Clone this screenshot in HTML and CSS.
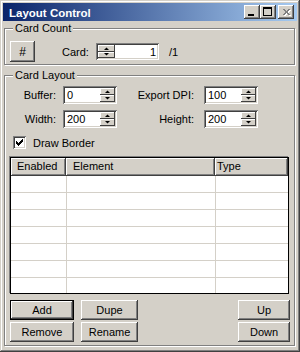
FILE: index.html
```html
<!DOCTYPE html>
<html>
<head>
<meta charset="utf-8">
<title>Layout Control</title>
<link rel="stylesheet" href="styles.css">
</head>
<body>
<div class="window">
  <div class="titlebar">
    <span class="title">Layout Control</span>
    <div class="tb-buttons">
      <span class="tb-btn"><span class="min-bar"></span></span>
      <span class="tb-btn"><span class="max-box"></span></span>
      <span class="tb-btn tb-close">
        <svg width="16" height="14" viewBox="0 0 16 14" shape-rendering="crispEdges">
          <path d="M5 4h2v1h-2zM10 4h2v1h-2zM6 5h2v1h-2zM9 5h2v1h-2zM7 6h3v1h-3zM7 7h3v1h-3zM6 8h2v1h-2zM9 8h2v1h-2zM5 9h2v1h-2zM10 9h2v1h-2z" fill="#fff" transform="translate(1,1)"/>
          <path d="M5 4h2v1h-2zM10 4h2v1h-2zM6 5h2v1h-2zM9 5h2v1h-2zM7 6h3v1h-3zM7 7h3v1h-3zM6 8h2v1h-2zM9 8h2v1h-2zM5 9h2v1h-2zM10 9h2v1h-2z" fill="#808080"/>
        </svg>
      </span>
    </div>
  </div>

  <fieldset class="group group-count">
    <legend>Card Count</legend>
    <div class="count-row">
      <button class="btn btn-hash">#</button>
      <span class="card-lbl">Card:</span>
      <div class="spin spin-card">
        <div class="spin-btns">
          <span class="spin-btn"><svg width="5" height="3" viewBox="0 0 5 3"><path d="M0 3H5L2.5 0.5Z"/></svg></span>
          <span class="spin-btn"><svg width="5" height="3" viewBox="0 0 5 3"><path d="M0 0H5L2.5 2.5Z"/></svg></span>
        </div>
        <span class="spin-val val-right">1</span>
      </div>
      <span class="total">/1</span>
    </div>
  </fieldset>

  <fieldset class="group group-layout">
    <legend>Card Layout</legend>
    <div class="field-row">
      <span class="lbl lbl-a">Buffer:</span>
      <div class="spin spin-field">
        <span class="spin-val">0</span>
        <div class="spin-btns">
          <span class="spin-btn"><svg width="5" height="3" viewBox="0 0 5 3"><path d="M0 3H5L2.5 0.5Z"/></svg></span>
          <span class="spin-btn"><svg width="5" height="3" viewBox="0 0 5 3"><path d="M0 0H5L2.5 2.5Z"/></svg></span>
        </div>
      </div>
      <span class="lbl lbl-b">Export DPI:</span>
      <div class="spin spin-field spin-b">
        <span class="spin-val">100</span>
        <div class="spin-btns">
          <span class="spin-btn"><svg width="5" height="3" viewBox="0 0 5 3"><path d="M0 3H5L2.5 0.5Z"/></svg></span>
          <span class="spin-btn"><svg width="5" height="3" viewBox="0 0 5 3"><path d="M0 0H5L2.5 2.5Z"/></svg></span>
        </div>
      </div>
    </div>
    <div class="field-row field-row-2">
      <span class="lbl lbl-a">Width:</span>
      <div class="spin spin-field">
        <span class="spin-val">200</span>
        <div class="spin-btns">
          <span class="spin-btn"><svg width="5" height="3" viewBox="0 0 5 3"><path d="M0 3H5L2.5 0.5Z"/></svg></span>
          <span class="spin-btn"><svg width="5" height="3" viewBox="0 0 5 3"><path d="M0 0H5L2.5 2.5Z"/></svg></span>
        </div>
      </div>
      <span class="lbl lbl-b">Height:</span>
      <div class="spin spin-field spin-b">
        <span class="spin-val">200</span>
        <div class="spin-btns">
          <span class="spin-btn"><svg width="5" height="3" viewBox="0 0 5 3"><path d="M0 3H5L2.5 0.5Z"/></svg></span>
          <span class="spin-btn"><svg width="5" height="3" viewBox="0 0 5 3"><path d="M0 0H5L2.5 2.5Z"/></svg></span>
        </div>
      </div>
    </div>

    <div class="check-row">
      <span class="checkbox">
        <svg width="13" height="13" viewBox="0 0 13 13" shape-rendering="crispEdges">
          <path d="M3 5h1v3h-1zM4 6h1v3h-1zM5 7h1v3h-1zM6 6h1v3h-1zM7 5h1v3h-1zM8 4h1v3h-1zM9 3h1v3h-1z" fill="#000"/>
        </svg>
      </span>
      <span class="check-lbl">Draw Border</span>
    </div>

    <div class="grid">
      <div class="grid-head">
        <span class="hcell">Enabled</span>
        <span class="hcell">Element</span>
        <span class="hcell hcell-type">Type</span>
      </div>
      <div class="grid-body">
        <div class="grow"><span></span><span></span><span></span></div>
        <div class="grow"><span></span><span></span><span></span></div>
        <div class="grow"><span></span><span></span><span></span></div>
        <div class="grow"><span></span><span></span><span></span></div>
        <div class="grow"><span></span><span></span><span></span></div>
        <div class="grow"><span></span><span></span><span></span></div>
        <div class="grow"><span></span><span></span><span></span></div>
      </div>
    </div>

    <div class="actions">
      <button class="btn btn-default">Add</button>
      <button class="btn">Dupe</button>
      <button class="btn btn-up">Up</button>
      <button class="btn">Remove</button>
      <button class="btn">Rename</button>
      <button class="btn btn-down">Down</button>
    </div>
  </fieldset>
</div>
</body>
</html>
```
FILE: styles.css
```css
* { box-sizing: border-box; }

html, body {
  margin: 0;
  padding: 0;
  background: #d4d0c8;
}

.window {
  width: 300px;
  height: 352px;
  padding: 3px;
  background: #d4d0c8;
  font: 11px "Liberation Sans", Arial, sans-serif;
  color: #000;
  box-shadow: inset -1px -1px #404040, inset 1px 1px #d4d0c8,
              inset -2px -2px #808080, inset 2px 2px #fff;
  overflow: hidden;
}

/* title bar */
.titlebar {
  height: 18px;
  display: flex;
  align-items: center;
  padding: 0 3px 0 6px;
  background: linear-gradient(to right, #0a246a, #a6caf0);
}
.title {
  flex: 1;
  color: #fff;
  font-weight: bold;
  font-size: 11.5px;
  line-height: 18px;
  padding-top: 1px;
}
.tb-buttons {
  display: flex;
  gap: 0;
}
.tb-btn {
  position: relative;
  width: 16px;
  height: 14px;
  background: #d4d0c8;
  box-shadow: inset -1px -1px #404040, inset 1px 1px #fff,
              inset -2px -2px #808080;
  display: block;
}
.tb-close { margin-left: 2px; }
.tb-close svg { display: block; }
.min-bar {
  position: absolute;
  left: 4px;
  top: 9px;
  width: 6px;
  height: 2px;
  background: #000;
}
.max-box {
  position: absolute;
  left: 3px;
  top: 2px;
  width: 9px;
  height: 9px;
  border: 1px solid #000;
  border-top-width: 2px;
}

/* group boxes */
.group {
  margin: 1px 2px 0 1px;
  padding: 0 0 2px 0;
  border: 1px solid #808080;
  box-shadow: inset 1px 1px #fff, 1px 1px #fff;
  min-width: 0;
}
.group legend {
  margin-left: 8px;
  padding: 0 2px;
  line-height: 13px;
  background: #d4d0c8;
}
.group-layout {
  margin-top: 4px;
  padding-bottom: 3px;
}

/* buttons */
.btn {
  font: inherit;
  color: #000;
  margin: 0;
  padding: 0;
  border: 0;
  background: #d4d0c8;
  box-shadow: inset -1px -1px #404040, inset 1px 1px #fff,
              inset -2px -2px #808080, inset 2px 2px #d4d0c8;
  height: 20px;
  text-align: center;
  line-height: 18px;
}
.btn-default {
  border: 1px solid #000;
  line-height: 16px;
}

/* card count */
.count-row {
  display: flex;
  align-items: center;
  height: 21px;
  margin-top: 6px;
}
.btn-hash {
  margin-left: 5px;
  width: 25px;
  height: 21px;
  font-size: 12px;
}
.card-lbl {
  margin-left: 27px;
  width: 34px;
}
.total {
  margin-left: 10px;
}

/* spinners */
.spin {
  display: flex;
  height: 18px;
  padding: 2px;
  background: #fff;
  box-shadow: inset 1px 1px #808080, inset -1px -1px #fff,
              inset 2px 2px #404040, inset -2px -2px #d4d0c8;
}
.spin-card {
  width: 63px;
  height: 17px;
}
.spin-field {
  width: 54px;
  margin-left: 7px;
}
.spin-b { margin-left: 10px; }
.spin-val {
  flex: 1;
  line-height: 14px;
  padding-left: 2px;
}
.val-right {
  text-align: right;
  padding-right: 1px;
}
.spin-btns {
  width: 15px;
  display: flex;
  flex-direction: column;
}
.spin-card .spin-btns { width: 17px; }
.spin-btn {
  flex: 1;
  display: flex;
  align-items: center;
  justify-content: center;
  background: #d4d0c8;
  box-shadow: inset -1px -1px #404040, inset 1px 1px #fff;
}
.spin-btn svg { display: block; fill: #000; }

/* field rows */
.field-row {
  display: flex;
  align-items: center;
  height: 18px;
  margin-top: 4px;
}
.field-row-2 { margin-top: 6px; }
.lbl { text-align: right; }
.lbl-a { width: 51px; }
.lbl-b { width: 77px; }

/* checkbox */
.check-row {
  display: flex;
  align-items: center;
  height: 13px;
  margin-top: 8px;
  padding-left: 8px;
}
.checkbox {
  width: 13px;
  height: 13px;
  background: #fff;
  box-shadow: inset 1px 1px #808080, inset -1px -1px #fff,
              inset 2px 2px #404040, inset -2px -2px #d4d0c8;
}
.checkbox svg { display: block; }
.check-lbl { margin-left: 7px; }

/* grid */
.grid {
  margin: 8px 5px 0 5px;
  height: 137px;
  border: 1px solid #000;
  background: #fff;
  overflow: hidden;
  box-shadow: -1px -1px #808080;
}
.grid-head {
  display: grid;
  grid-template-columns: 55px 149px 1fr;
  height: 18px;
}
.hcell {
  background: #d4d0c8;
  box-shadow: inset -1px -1px #404040, inset 1px 1px #fff,
              inset -2px -2px #808080;
  line-height: 17px;
  padding-left: 6px;
  white-space: nowrap;
}
.hcell:nth-child(2) { padding-left: 7px; }
.hcell-type { padding-left: 2px; }
.grow {
  display: grid;
  grid-template-columns: 56px 149px 1fr;
  height: 17px;
  border-bottom: 1px solid #d4d0c8;
}
.grow span { border-right: 1px solid #d4d0c8; }
.grow span:last-child { border-right: 0; }

/* action buttons */
.actions {
  display: grid;
  grid-template-columns: 64px 57px 1fr 52px;
  grid-template-rows: 20px 20px;
  column-gap: 7px;
  row-gap: 2px;
  margin: 6px 4px 0 5px;
}
.btn-up, .btn-down { grid-column: 4; }
.btn-down { grid-row: 2; }
```
